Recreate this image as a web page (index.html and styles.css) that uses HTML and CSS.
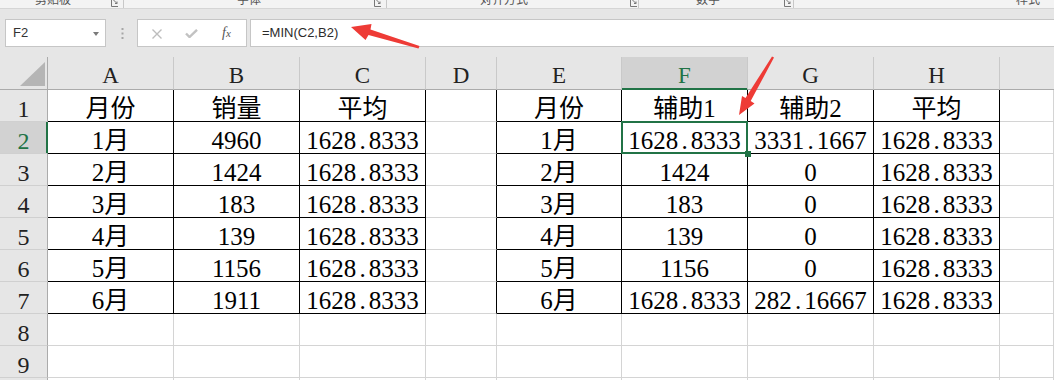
FILE: index.html
```html
<!DOCTYPE html>
<html lang="zh-CN">
<head>
<meta charset="utf-8">
<title>Sheet</title>
<link rel="stylesheet" href="styles.css">
</head>
<body>
<div class="app">
  <div class="ribbon">
    <span class="rlabel r1">剪贴板</span>
    <span class="launch l1"><svg width="8" height="8" viewBox="0 0 8 8"><path d="M0.5 0 V6.5 H7 M2.5 0 L6 3.5 M6 1.5 V3.5 H4" fill="none" stroke="#777" stroke-width="1"/></svg></span>
    <span class="rsep s1"></span>
    <span class="rlabel r2">字体</span>
    <span class="launch l2"><svg width="8" height="8" viewBox="0 0 8 8"><path d="M0.5 0 V6.5 H7 M2.5 0 L6 3.5 M6 1.5 V3.5 H4" fill="none" stroke="#777" stroke-width="1"/></svg></span>
    <span class="rsep s2"></span>
    <span class="rlabel r3">对齐方式</span>
    <span class="launch l3"><svg width="8" height="8" viewBox="0 0 8 8"><path d="M0.5 0 V6.5 H7 M2.5 0 L6 3.5 M6 1.5 V3.5 H4" fill="none" stroke="#777" stroke-width="1"/></svg></span>
    <span class="rsep s3"></span>
    <span class="rlabel r4">数字</span>
    <span class="launch l4"><svg width="8" height="8" viewBox="0 0 8 8"><path d="M0.5 0 V6.5 H7 M2.5 0 L6 3.5 M6 1.5 V3.5 H4" fill="none" stroke="#777" stroke-width="1"/></svg></span>
    <span class="rsep s4"></span>
    <span class="rlabel r5">样式</span>
  </div>

  <div class="fbar">
    <div class="namebox"><span class="nbtext">F2</span><span class="caret"></span></div>
    <div class="dots"><svg width="3" height="12" viewBox="0 0 3 12"><rect x="0.5" y="0" width="2" height="2" fill="#a6a6a6"/><rect x="0.5" y="4.5" width="2" height="2" fill="#a6a6a6"/><rect x="0.5" y="9" width="2" height="2" fill="#a6a6a6"/></svg></div>
    <div class="fnbox">
      <svg class="ic-x" width="12" height="10" viewBox="0 0 12 10"><path d="M1.5 0.5 L10.5 9.5 M10.5 0.5 L1.5 9.5" stroke="#bdbdbd" stroke-width="1.4" fill="none"/></svg>
      <svg class="ic-ok" width="13" height="9" viewBox="0 0 13 9"><path d="M1 4.5 L4.5 8 L12 0.8" stroke="#c2c2c2" stroke-width="2.4" fill="none"/></svg>
      <span class="fx">f<span class="fxx">x</span></span>
    </div>
    <div class="formula">=MIN(C2,B2)</div>
  </div>

  <div class="sheet">
    <div class="h corner"><svg width="25" height="24" viewBox="0 0 25 24"><polygon points="25,0 25,24 0,24" fill="#b5b5b5"/></svg></div>
    <div class="h col">A</div>
    <div class="h col">B</div>
    <div class="h col">C</div>
    <div class="h col">D</div>
    <div class="h col">E</div>
    <div class="h col csel">F</div>
    <div class="h col">G</div>
    <div class="h col">H</div>
    <div class="h col last"></div>

    <div class="h row">1</div>
    <div class="c b">月份</div>
    <div class="c b">销量</div>
    <div class="c b">平均</div>
    <div class="c db"></div>
    <div class="c b">月份</div>
    <div class="c b">辅助1</div>
    <div class="c b">辅助2</div>
    <div class="c b">平均</div>
    <div class="c"></div>

    <div class="h row rsel">2</div>
    <div class="c b">1月</div>
    <div class="c b">4960</div>
    <div class="c b">1628<span class="dot">.</span>8333</div>
    <div class="c db"></div>
    <div class="c b">1月</div>
    <div class="c b sel">1628<span class="dot">.</span>8333<span class="selbox"></span><span class="handle"></span></div>
    <div class="c b">3331<span class="dot">.</span>1667</div>
    <div class="c b">1628<span class="dot">.</span>8333</div>
    <div class="c"></div>

    <div class="h row">3</div>
    <div class="c b">2月</div>
    <div class="c b">1424</div>
    <div class="c b">1628<span class="dot">.</span>8333</div>
    <div class="c db"></div>
    <div class="c b">2月</div>
    <div class="c b">1424</div>
    <div class="c b">0</div>
    <div class="c b">1628<span class="dot">.</span>8333</div>
    <div class="c"></div>

    <div class="h row">4</div>
    <div class="c b">3月</div>
    <div class="c b">183</div>
    <div class="c b">1628<span class="dot">.</span>8333</div>
    <div class="c db"></div>
    <div class="c b">3月</div>
    <div class="c b">183</div>
    <div class="c b">0</div>
    <div class="c b">1628<span class="dot">.</span>8333</div>
    <div class="c"></div>

    <div class="h row">5</div>
    <div class="c b">4月</div>
    <div class="c b">139</div>
    <div class="c b">1628<span class="dot">.</span>8333</div>
    <div class="c db"></div>
    <div class="c b">4月</div>
    <div class="c b">139</div>
    <div class="c b">0</div>
    <div class="c b">1628<span class="dot">.</span>8333</div>
    <div class="c"></div>

    <div class="h row">6</div>
    <div class="c b">5月</div>
    <div class="c b">1156</div>
    <div class="c b">1628<span class="dot">.</span>8333</div>
    <div class="c db"></div>
    <div class="c b">5月</div>
    <div class="c b">1156</div>
    <div class="c b">0</div>
    <div class="c b">1628<span class="dot">.</span>8333</div>
    <div class="c"></div>

    <div class="h row">7</div>
    <div class="c b">6月</div>
    <div class="c b">1911</div>
    <div class="c b">1628<span class="dot">.</span>8333</div>
    <div class="c db"></div>
    <div class="c b">6月</div>
    <div class="c b">1628<span class="dot">.</span>8333</div>
    <div class="c b">282<span class="dot">.</span>16667</div>
    <div class="c b">1628<span class="dot">.</span>8333</div>
    <div class="c"></div>

    <div class="h row">8</div>
    <div class="c"></div><div class="c"></div><div class="c"></div><div class="c"></div><div class="c"></div><div class="c"></div><div class="c"></div><div class="c"></div><div class="c"></div>

    <div class="h row">9</div>
    <div class="c"></div><div class="c"></div><div class="c"></div><div class="c"></div><div class="c"></div><div class="c"></div><div class="c"></div><div class="c"></div><div class="c"></div>

    <div class="h row">10</div>
    <div class="c"></div><div class="c"></div><div class="c"></div><div class="c"></div><div class="c"></div><div class="c"></div><div class="c"></div><div class="c"></div><div class="c"></div>
  </div>

  <svg class="arrows" width="1054" height="380" viewBox="0 0 1054 380">
    <polygon points="351,27 371.5,24 370.5,29.5 419.5,46 418.5,48.5 368.5,35 365.5,40" fill="#ee3b36"/>
    <polygon points="739,115 742,96 745.5,98 772,56.5 774,57.5 750.7,101 754.5,103.5" fill="#ee3b36"/>
  </svg>
</div>
</body>
</html>
```

FILE: styles.css
```css
* { box-sizing: border-box; }
html, body { margin: 0; padding: 0; }
body {
  width: 1054px;
  height: 380px;
  overflow: hidden;
  background: #e6e6e6;
  font-family: "Liberation Sans", Arial, sans-serif;
}
.app { position: relative; width: 1054px; height: 380px; overflow: hidden; }

/* ribbon strip (cut off) */
.ribbon {
  height: 9px;
  background: #f3f3f3;
  border-bottom: 1px solid #d5d5d5;
  display: flex;
  align-items: flex-start;
  overflow: hidden;
}
.rlabel {
  font-family: "Noto Sans CJK SC", sans-serif;
  font-size: 12px;
  line-height: 12px;
  color: #555;
  margin-top: -7px;
  white-space: nowrap;
}
.launch { display: block; width: 8px; height: 8px; }
.launch svg { display: block; }
.rsep { display: block; width: 1px; height: 8px; background: #c8c8c8; }
.r1 { margin-left: 35px; }
.l1 { margin-left: 40px; }
.s1 { margin-left: 4px; }
.r2 { margin-left: 113px; }
.l2 { margin-left: 113px; }
.s2 { margin-left: 4px; }
.r3 { margin-left: 93px; }
.l3 { margin-left: 102px; }
.s3 { margin-left: 0px; }
.r4 { margin-left: 57px; }
.l4 { margin-left: 64px; }
.s4 { margin-left: 1px; }
.r5 { margin-left: 222px; }

/* formula bar */
.fbar {
  height: 48px;
  padding-top: 10px;
  display: flex;
  align-items: flex-start;
}
.namebox {
  margin-left: 5px;
  width: 101px;
  height: 28px;
  background: #fff;
  border: 1px solid #c6c6c6;
  display: flex;
  align-items: center;
  justify-content: space-between;
  padding: 0 6px 0 7px;
}
.nbtext { font-size: 13px; color: #333; line-height: 14px; }
.caret {
  width: 0; height: 0;
  border-left: 3.5px solid transparent;
  border-right: 3.5px solid transparent;
  border-top: 4px solid #7a7a7a;
  margin-top: 1px;
}
.dots { margin-left: 15px; margin-top: 9px; width: 3px; }
.dots svg { display: block; }
.fnbox {
  margin-left: 13px;
  width: 110px;
  height: 28px;
  background: #fff;
  border: 1px solid #c6c6c6;
  display: flex;
  align-items: center;
  padding-left: 13px;
}
.ic-x { display: block; margin-top: 1px; }
.ic-ok { display: block; margin-left: 22px; margin-top: 1px; }
.fx {
  margin-left: 24px;
  font-family: "Liberation Serif", serif;
  font-style: italic;
  font-size: 14px;
  color: #555;
  line-height: 14px;
}
.fxx { font-size: 11px; }
.formula {
  margin-left: 3px;
  flex: 1;
  height: 28px;
  background: #fff;
  border: 1px solid #c6c6c6;
  border-right: none;
  display: flex;
  align-items: center;
  padding-left: 11px;
  font-size: 13px;
  color: #2b2b2b;
  line-height: 14px;
}

/* sheet grid */
.sheet {
  display: grid;
  grid-template-columns: 48px 126px 126px 126px 71px 125px 126px 126px 126px 1fr;
  grid-template-rows: 33px;
  grid-auto-rows: 32px;
  background: #fff;
}
.h {
  background: #e6e6e6;
  font-family: "Liberation Serif", serif;
  color: #222;
  display: flex;
  align-items: flex-end;
  justify-content: center;
}
.corner {
  border-right: 1px solid #ababab;
  border-bottom: 1px solid #ababab;
  justify-content: flex-end;
  padding: 0 2px 3px 0;
}
.corner svg { display: block; }
.col {
  font-size: 23px;
  line-height: 23px;
  padding-bottom: 2px;
  border-right: 1px solid #c9c9c9;
  border-bottom: 1px solid #ababab;
}
.col.last { border-right: none; }
.csel {
  background: #d2d2d2;
  color: #217346;
  border-bottom-color: #217346;
  box-shadow: inset 0 -1px 0 #217346;
}
.row {
  font-size: 24px;
  line-height: 24px;
  border-right: 1px solid #ababab;
  border-bottom: 1px solid #d0d0d0;
}
.rsel {
  background: #d2d2d2;
  color: #217346;
  border-right-color: #217346;
  box-shadow: inset -1px 0 0 #217346;
}
.c {
  font-family: "Liberation Serif", "Noto Sans CJK SC", serif;
  font-size: 25px;
  line-height: 25px;
  color: #000;
  border-right: 1px solid #d4d4d4;
  border-bottom: 1px solid #d4d4d4;
  display: flex;
  align-items: flex-end;
  justify-content: center;
  white-space: nowrap;
}
.c.b { border-right-color: #000; border-bottom-color: #000; }
.c.db { border-right-color: #000; }
.dot { display: inline-block; width: 12.5px; text-align: center; }

.sel { position: relative; z-index: 2; }
.selbox {
  position: absolute;
  left: -1px;
  top: -1px;
  width: 127px;
  height: 33px;
  border: 2px solid #217346;
}
.handle {
  position: absolute;
  left: 123px;
  top: 29px;
  width: 6px;
  height: 6px;
  background: #217346;
}

.arrows {
  position: absolute;
  left: 0;
  top: 0;
  pointer-events: none;
  z-index: 5;
}
```
